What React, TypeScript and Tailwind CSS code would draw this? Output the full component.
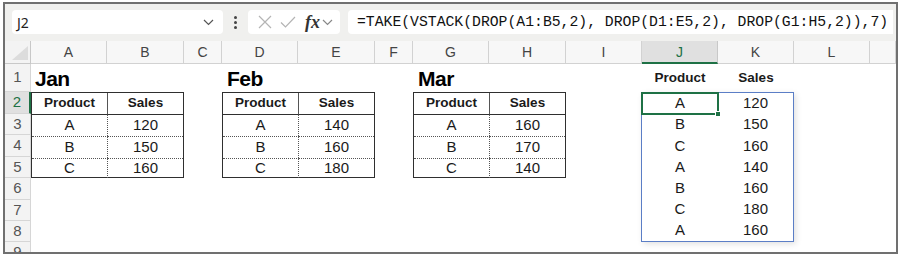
import React from "react";

const ColLetters = ["A", "B", "C", "D", "E", "F", "G", "H", "I", "J", "K", "L", ""];

function Chevron({ className }: { className?: string }) {
  return (
    <svg width="11" height="7" viewBox="0 0 11 7" className={className}>
      <path d="M1 1 L5.5 5.5 L10 1" fill="none" stroke="currentColor" strokeWidth="1.2" />
    </svg>
  );
}

function MonthTable({ rows }: { rows: [string, string][] }) {
  return (
    <div className="grid h-full grid-cols-[76px_1fr] grid-rows-[22px_21px_22px_20px] border border-[#2f2f2f] text-[#1a1a1a]" style={{ fontFamily: '"Liberation Sans", Arial, sans-serif' }}>
      <div className="flex items-center justify-center border-b border-r border-b-[#2f2f2f] border-r-[#555] border-r-dotted text-[13.5px] font-bold">Product</div>
      <div className="flex items-center justify-center border-b border-[#2f2f2f] text-[13.5px] font-bold">Sales</div>
      {rows.map(([p, s], i) => (
        <React.Fragment key={i}>
          <div className={`flex items-center justify-center border-r border-dotted border-[#555] text-[15px] ${i > 0 ? "border-t" : ""}`}>{p}</div>
          <div className={`flex items-center justify-center border-dotted border-[#555] text-[15px] ${i > 0 ? "border-t" : ""}`}>{s}</div>
        </React.Fragment>
      ))}
    </div>
  );
}

export default function App() {
  const rowNums = [1, 2, 3, 4, 5, 6, 7, 8, 9];
  const spill: [string, string][] = [
    ["A", "120"],
    ["B", "150"],
    ["C", "160"],
    ["A", "140"],
    ["B", "160"],
    ["C", "180"],
    ["A", "160"],
  ];
  return (
    <div className="h-[258px] w-[903px] bg-white pl-[3px] pt-[2px]">
      <div className="flex h-[252px] w-[895px] flex-col overflow-hidden border-2 border-[#707070] bg-white">
        {/* formula bar */}
        <div className="flex h-[37px] shrink-0 items-start bg-[#f0f0ee] pt-[6px]" style={{ fontFamily: '"Noto Sans", "Liberation Sans", sans-serif' }}>
          <div className="ml-[7px] flex h-[24px] w-[211px] items-center justify-between rounded-[4px] bg-white pl-[5px] pr-[9px] text-[14px] text-[#222]">
            <span>J2</span>
            <Chevron className="text-[#555]" />
          </div>
          <div className="flex h-[24px] w-[25px] flex-col items-center justify-center gap-[2px]">
            <span className="h-[3px] w-[3px] rounded-full bg-[#444]" />
            <span className="h-[3px] w-[3px] rounded-full bg-[#444]" />
            <span className="h-[3px] w-[3px] rounded-full bg-[#444]" />
          </div>
          <div className="flex h-[24px] w-[92px] items-center rounded-[4px] bg-white pl-[9px]">
            <svg width="16" height="16" viewBox="0 0 16 16">
              <path d="M2 2 L14 14 M14 2 L2 14" stroke="#b4b4b4" strokeWidth="1.2" fill="none" />
            </svg>
            <svg width="18" height="16" viewBox="0 0 18 16" className="ml-[6px]">
              <path d="M2 8.5 L6.5 13 L16 3" stroke="#b4b4b4" strokeWidth="1.2" fill="none" />
            </svg>
            <span className="ml-[8px] text-[18px] font-bold italic leading-none text-[#333]" style={{ fontFamily: '"Liberation Serif", "Times New Roman", serif' }}>
              fx
            </span>
            <Chevron className="ml-[2px] text-[#888]" />
          </div>
          <div className="ml-[8px] flex h-[24px] w-[545px] items-center rounded-l-[4px] bg-white pl-[9px] text-[14.75px] text-[#111]" style={{ fontFamily: '"Liberation Mono", "DejaVu Sans Mono", monospace' }}>
            =TAKE(VSTACK(DROP(A1:B5,2), DROP(D1:E5,2), DROP(G1:H5,2)),7)
          </div>
        </div>

        {/* sheet */}
        <div
          className="grid flex-1 grid-cols-[26px_76px_77px_38px_76px_77px_38px_76px_77px_76px_76px_76px_76px_1fr] grid-rows-[23px_28px_22px_21px_22px_21px_22px_21px_21px_21px] overflow-hidden"
          style={{ fontFamily: '"Liberation Sans", Arial, sans-serif' }}
        >
          {/* corner */}
          <div className="relative col-start-1 row-start-1 border-b border-r border-[#c8c8c8] bg-[#f3f3f3]">
            <svg width="16" height="14" viewBox="0 0 16 14" className="absolute bottom-[3px] right-[2px]">
              <path d="M16 0 L16 14 L0 14 Z" fill="#dcdcdc" />
            </svg>
          </div>
          {/* column headers */}
          {ColLetters.map((c, i) =>
            c === "J" ? (
              <div key={i} className="row-start-1 flex items-center justify-center border-b-2 border-r border-b-[#1e7145] border-r-[#c8c8c8] bg-[#e0e0e0] pt-[2px] text-[14px] text-[#1e7145]">
                {c}
              </div>
            ) : (
              <div key={i} className="row-start-1 flex items-center justify-center border-b border-r border-[#d2d2d2] bg-[#f7f7f7] text-[14px] text-[#444]">
                {c}
              </div>
            )
          )}
          {/* row numbers */}
          {rowNums.map((n) => (
            <div
              key={n}
              className={`col-start-1 flex items-center justify-center border-b text-[15px] ${
                n === 2
                  ? "border-r-2 border-b-[#d6d6d6] border-r-[#1e7145] bg-[#e0e0e0] text-[#1e7145]"
                  : "border-r border-[#d6d6d6] bg-[#f3f3f3] text-[#555]"
              }`}
              style={{ gridRowStart: n + 1 }}
            >
              {n}
            </div>
          ))}

          {/* titles */}
          <div className="col-start-2 row-start-2 flex items-end pb-[3px] pl-[4px] text-[21px] font-bold leading-none tracking-[-0.5px] text-black">Jan</div>
          <div className="col-start-5 row-start-2 flex items-end pb-[3px] pl-[5px] text-[21px] font-bold leading-none tracking-[-0.5px] text-black">Feb</div>
          <div className="col-start-8 row-start-2 flex items-end pb-[3px] pl-[5px] text-[21px] font-bold leading-none tracking-[-0.5px] text-black">Mar</div>
          <div className="col-start-11 row-start-2 flex items-center justify-center text-[13.5px] font-bold text-[#1a1a1a]">Product</div>
          <div className="col-start-12 row-start-2 flex items-center justify-center text-[13.5px] font-bold text-[#1a1a1a]">Sales</div>

          {/* tables */}
          <div className="col-span-2 col-start-2 row-span-4 row-start-3">
            <MonthTable rows={[["A", "120"], ["B", "150"], ["C", "160"]]} />
          </div>
          <div className="col-span-2 col-start-5 row-span-4 row-start-3">
            <MonthTable rows={[["A", "140"], ["B", "160"], ["C", "180"]]} />
          </div>
          <div className="col-span-2 col-start-8 row-span-4 row-start-3">
            <MonthTable rows={[["A", "160"], ["B", "170"], ["C", "140"]]} />
          </div>

          {/* spill range */}
          <div className="relative col-span-2 col-start-11 row-span-7 row-start-3 -ml-px border border-[#5b7ec6] shadow-[2px_2px_6px_rgba(0,0,0,0.12)]">
            <div className="grid h-full grid-cols-[76px_1fr] grid-rows-7 text-[15px] text-[#1a1a1a]">
              {spill.map(([p, s], i) => (
                <React.Fragment key={i}>
                  <div className="flex items-center justify-center">{p}</div>
                  <div className="flex items-center justify-center">{s}</div>
                </React.Fragment>
              ))}
            </div>
            <div className="absolute left-[-1px] top-[-1px] h-[23px] w-[78px] border-2 border-[#1e7145]">
              <div className="absolute bottom-[-4px] right-[-4px] h-[6px] w-[6px] border border-white bg-[#1e7145]" />
            </div>
          </div>
        </div>
      </div>
    </div>
  );
}
